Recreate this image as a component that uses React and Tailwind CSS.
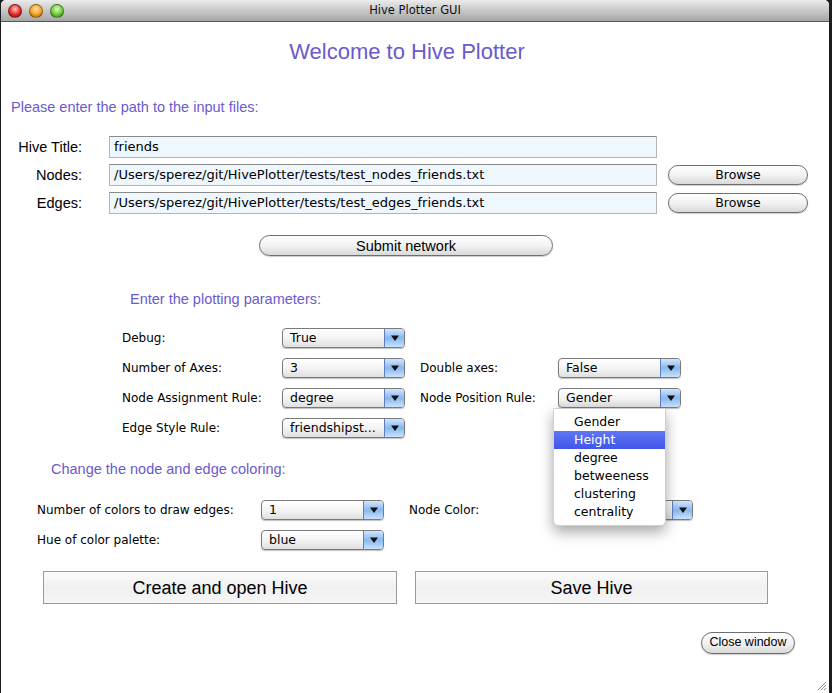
import React from "react";

const dv = "font-['DejaVu_Sans',Verdana,sans-serif]";

function Arrow() {
  return (
    <svg width="8" height="6" viewBox="0 0 8 6">
      <path d="M0 0.5h8L4 6z" fill="#111" />
    </svg>
  );
}

function Popup({ value }) {
  return (
    <div className="flex h-[20px] w-[123px] items-stretch overflow-hidden rounded-[4px] border border-[#7a7a7a] bg-gradient-to-b from-white via-[#f4f4f4] to-[#e0e0e0] shadow-[0_1px_1px_rgba(0,0,0,0.25)]">
      <span className={`flex-1 truncate pl-[7px] text-[12.5px] leading-[18px] text-black ${dv}`}>{value}</span>
      <span className="flex w-[20px] items-center justify-center border-l border-[#5d7fbd] bg-gradient-to-b from-[#d3e6fc] via-[#86b8f0] to-[#c9e2fc]">
        <Arrow />
      </span>
    </div>
  );
}

function Pill({ children, className }) {
  return (
    <button
      className={`rounded-full border border-[#6e6e6e] bg-gradient-to-b from-white via-[#f2f2f2] to-[#d9d9d9] text-black shadow-[0_1px_1px_rgba(0,0,0,0.2)] ${className}`}
    >
      {children}
    </button>
  );
}

function Light({ color }) {
  return <span className={`h-[14px] w-[14px] rounded-full border border-[#00000055] ${color}`} />;
}

function App() {
  const files = [
    { label: "Hive Title:", value: "friends" },
    { label: "Nodes:", value: "/Users/sperez/git/HivePlotter/tests/test_nodes_friends.txt", browse: true },
    { label: "Edges:", value: "/Users/sperez/git/HivePlotter/tests/test_edges_friends.txt", browse: true },
  ];
  const menu = ["Gender", "Height", "degree", "betweeness", "clustering", "centrality"];

  return (
    <div className="h-[693px] w-[832px] bg-[#1c1c1c] pl-px pr-[3px] font-['Liberation_Sans',Arial,sans-serif]">
      <div className="relative h-full overflow-hidden rounded-t-[5px] bg-white">
        {/* title bar */}
        <div className="relative flex h-[22px] items-center border-b border-[#555] bg-gradient-to-b from-[#ebebeb] to-[#a6a6a6] pl-[7px]">
          <div className="flex gap-[7px]">
            <Light color="bg-[radial-gradient(circle_at_50%_35%,#ffc4c4,#e02a2a_55%,#8e0a0a)]" />
            <Light color="bg-[radial-gradient(circle_at_50%_35%,#ffe7a8,#f0a020_55%,#a05a00)]" />
            <Light color="bg-[radial-gradient(circle_at_50%_35%,#dcffc0,#6cc83a_55%,#2e7a10)]" />
          </div>
          <span className={`absolute left-0 right-0 text-center text-[11.5px] text-[#111] ${dv}`}>Hive Plotter GUI</span>
        </div>

        <h1 className="mt-[17px] pr-[16px] text-center text-[22px] leading-[26px] text-[#6a5acd]">Welcome to Hive Plotter</h1>

        <p className="ml-[10px] mt-[33px] text-[14.5px] leading-[18px] text-[#6a5acd]">Please enter the path to the input files:</p>

        <div className="mt-[20px] flex flex-col gap-[6px]">
          {files.map((f) => (
            <div key={f.label} className="flex h-[22px] items-center">
              <span className="w-[81px] pt-px text-right text-[14.5px] text-black">{f.label}</span>
              <div className={`ml-[27px] flex h-[22px] w-[548px] items-center border border-[#b4b4b4] border-t-[#8a8a8a] bg-[#eef6fe] pl-[4px] text-[13px] text-black ${dv}`}>
                {f.value}
              </div>
              {f.browse && <Pill className={`ml-[11px] h-[20px] w-[140px] text-[12.5px] ${dv}`}>Browse</Pill>}
            </div>
          ))}
        </div>

        <Pill className="ml-[258px] mt-[21px] h-[21px] w-[294px] text-[14.5px] leading-[18px]">Submit network</Pill>

        <p className="ml-[129px] mt-[32px] text-[14.5px] leading-[18px] text-[#6a5acd]">Enter the plotting parameters:</p>

        <div className={`mt-[20px] flex flex-col gap-[10px] text-[12px] text-black ${dv}`}>
          <div className="flex h-[20px] items-center pl-[121px]">
            <span className="w-[160px]">Debug:</span>
            <Popup value="True" />
          </div>
          <div className="flex h-[20px] items-center pl-[121px]">
            <span className="w-[160px]">Number of Axes:</span>
            <Popup value="3" />
            <span className="ml-[15px] w-[138px]">Double axes:</span>
            <Popup value="False" />
          </div>
          <div className="flex h-[20px] items-center pl-[121px]">
            <span className="w-[160px]">Node Assignment Rule:</span>
            <Popup value="degree" />
            <span className="ml-[15px] w-[138px]">Node Position Rule:</span>
            <div className="relative">
              <Popup value="Gender" />
              <ul className="absolute left-[-5px] top-[20px] z-10 w-[113px] rounded-b-[5px] border border-[#cfcfcf] bg-white py-[4px] shadow-[0_6px_14px_rgba(0,0,0,0.35)]">
                {menu.map((m) => (
                  <li
                    key={m}
                    className={`h-[18px] pl-[20px] text-[12.5px] leading-[18px] ${m === "Height" ? "bg-gradient-to-b from-[#6076f4] to-[#3f56ea] text-white" : "text-black"}`}
                  >
                    {m}
                  </li>
                ))}
              </ul>
            </div>
          </div>
          <div className="flex h-[20px] items-center pl-[121px]">
            <span className="w-[160px]">Edge Style Rule:</span>
            <Popup value="friendshipst..." />
          </div>
        </div>

        <p className="ml-[50px] mt-[22px] text-[14.5px] leading-[18px] text-[#6a5acd]">Change the node and edge coloring:</p>

        <div className={`mt-[22px] flex flex-col gap-[10px] text-[12px] text-black ${dv}`}>
          <div className="flex h-[20px] items-center pl-[36px]">
            <span className="w-[224px]">Number of colors to draw edges:</span>
            <Popup value="1" />
            <span className="ml-[25px] w-[161px]">Node Color:</span>
            <Popup value="" />
          </div>
          <div className="flex h-[20px] items-center pl-[36px]">
            <span className="w-[224px]">Hue of color palette:</span>
            <Popup value="blue" />
          </div>
        </div>

        <div className="ml-[42px] mt-[21px] flex gap-[18px]">
          <button className="h-[33px] w-[354px] border border-[#9a9a9a] bg-gradient-to-b from-[#fbfbfb] via-[#f0f0f0] to-[#f6f6f6] pt-[2px] text-[18px] text-black">Create and open Hive</button>
          <button className="h-[33px] w-[353px] border border-[#9a9a9a] bg-gradient-to-b from-[#fbfbfb] via-[#f0f0f0] to-[#f6f6f6] pt-[2px] text-[18px] text-black">Save Hive</button>
        </div>

        <Pill className="ml-[700px] mt-[28px] h-[22px] w-[94px] text-[12.5px]">Close window</Pill>

        <svg className="absolute bottom-[2px] right-[2px]" width="11" height="11" viewBox="0 0 11 11">
          <path d="M10 2L2 10M10 5L5 10M10 8L8 10" stroke="#8a8a8a" strokeWidth="1" />
        </svg>
      </div>
    </div>
  );
}

export default App;
